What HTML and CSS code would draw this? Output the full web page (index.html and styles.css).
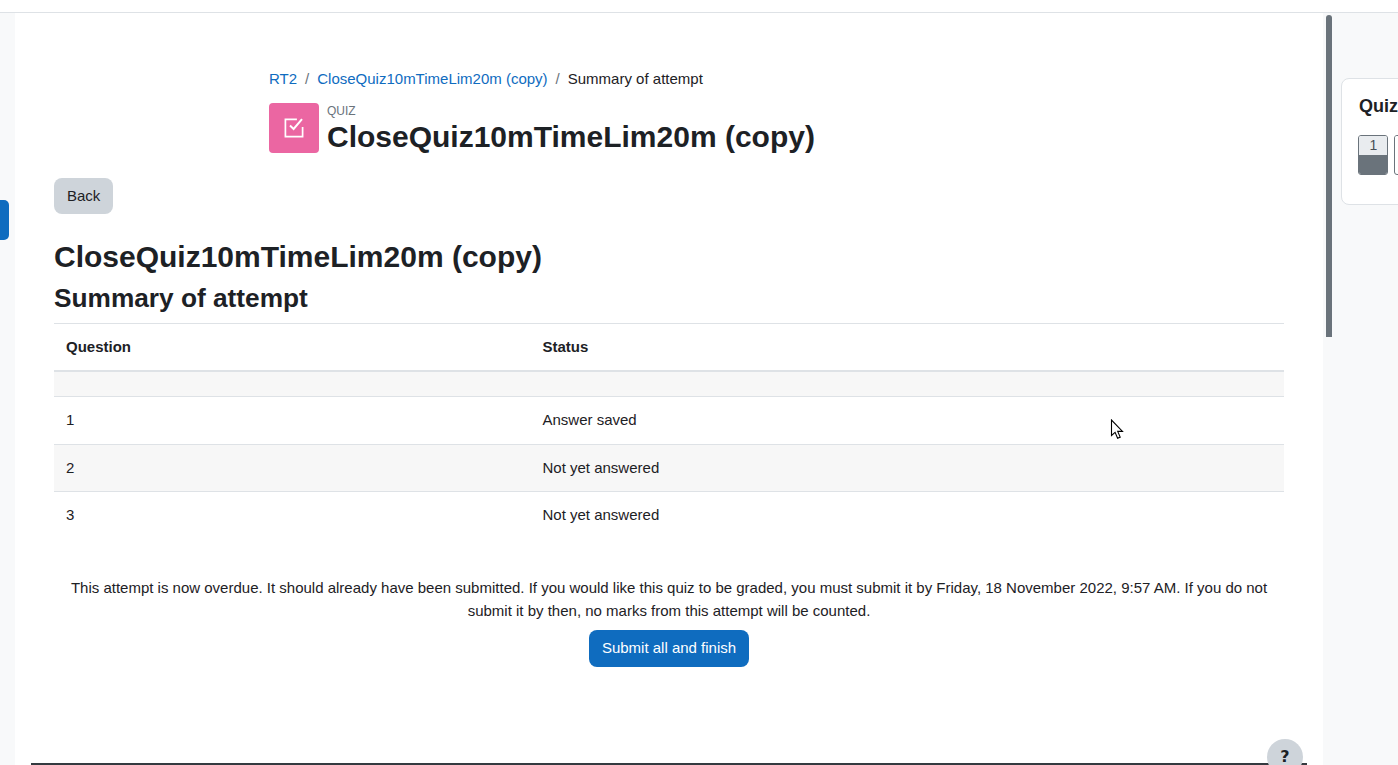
FILE: index.html
```html
<!DOCTYPE html>
<html lang="en">
<head>
<meta charset="utf-8">
<title>Summary of attempt</title>
<link rel="stylesheet" href="styles.css">
</head>
<body>
<div class="topbar"></div>
<div class="layout">
  <div class="left-strip"><span class="drawer-handle"></span></div>
  <main class="main">
    <div class="header-block">
      <nav class="breadcrumb">
        <a href="#">RT2</a><span class="sep">/</span><a href="#">CloseQuiz10mTimeLim20m (copy)</a><span class="sep">/</span><span class="current">Summary of attempt</span>
      </nav>
      <div class="title-row">
        <div class="activity-icon">
          <svg viewBox="0 0 24 24" width="24" height="24" fill="none" stroke="#fff" stroke-width="1.7"><path d="M20.6 11v9.6H3.4V3.4h11.5"/><path d="M8 9.6l3.6 3.4L20 3.2" stroke-width="2"/></svg>
        </div>
        <div class="title-text">
          <div class="modtype">QUIZ</div>
          <h1 class="page-title">CloseQuiz10mTimeLim20m (copy)</h1>
        </div>
      </div>
    </div>
    <a class="btn btn-back" href="#">Back</a>
    <h2 class="quiz-name">CloseQuiz10mTimeLim20m (copy)</h2>
    <h3 class="summary-title">Summary of attempt</h3>
    <table class="summary">
      <thead><tr><th class="col-q">Question</th><th>Status</th></tr></thead>
      <tbody>
        <tr class="odd spacer"><td></td><td></td></tr>
        <tr><td>1</td><td>Answer saved</td></tr>
        <tr class="odd row-short"><td>2</td><td>Not yet answered</td></tr>
        <tr><td>3</td><td>Not yet answered</td></tr>
      </tbody>
    </table>
    <p class="overdue">This attempt is now overdue. It should already have been submitted. If you would like this quiz to be graded, you must submit it by Friday, 18 November 2022, 9:57 AM. If you do not submit it by then, no marks from this attempt will be counted.</p>
    <div class="submit-row"><a class="btn btn-primary" href="#">Submit all and finish</a></div>
    <div class="footer-line"></div>
    <span class="help-badge">?</span>
  </main>
  <aside class="right">
    <span class="scroll-thumb"></span>
    <section class="nav-card">
      <h4 class="nav-title">Quiz navigation</h4>
      <div class="nav-buttons">
        <span class="qbtn saved"><span class="qnum">1</span><span class="qfill"></span></span>
        <span class="qbtn"><span class="qnum">2</span><span class="qfill"></span></span>
      </div>
    </section>
  </aside>
</div>
<svg class="cursor" width="14" height="21" viewBox="0 0 14 21"><path d="M1.5 1v15.5l3.6-3.2 2.5 5.9 2.6-1.1-2.5-5.7h4.8z" fill="#fff" stroke="#000" stroke-width="1.1"/></svg>
</body>
</html>
```
FILE: styles.css
```css
* { box-sizing: border-box; }
html, body { margin: 0; height: 765px; overflow: hidden; }
body {
  position: relative;
  font-family: "Liberation Sans", Arial, sans-serif;
  font-size: 15px;
  line-height: 22.5px;
  color: #1d2125;
  background: #f8f9fa;
}
a { color: #0f6cbf; text-decoration: none; }
.topbar { height: 13px; background: #fff; border-bottom: 1px solid #dee2e6; }
.layout { display: flex; height: 752px; }
.left-strip { width: 15px; flex: none; position: relative; }
.drawer-handle {
  position: absolute; left: 0; top: 187px; width: 9px; height: 40px;
  background: #0f6cbf; border-radius: 0 5px 5px 0;
}
.main {
  width: 1308px; flex: none; position: relative; background: #fff;
  padding: 55px 39px 0;
}
.header-block { padding-left: 215px; }
.breadcrumb { display: flex; height: 23px; align-items: center; }
.breadcrumb .sep { padding: 0 8px; color: #6a737b; }
.breadcrumb .current { color: #1d2125; }
.title-row { display: flex; margin-top: 12px; gap: 8px; }
.activity-icon {
  width: 50px; height: 50px; flex: none; background: #eb66a2; border-radius: 4px;
  display: flex; align-items: center; justify-content: center;
}
.title-text { display: flex; flex-direction: column; }
.modtype { font-size: 12px; line-height: 14px; color: #6a737b; margin-top: 1px; }
.page-title { margin: 1px 0 0; font-size: 30px; line-height: 36px; font-weight: 700; color: #1d2125; }
.btn {
  display: inline-block; font-size: 15px; line-height: 22.5px; padding: 7px 13px;
  border-radius: 8px;
}
.btn-back { background: #ced4da; color: #1d2125; margin-top: 23px; display: block; width: 59px; height: 36px; }
.quiz-name { margin: 25px 0 0; font-size: 30px; line-height: 36px; font-weight: 700; }
.summary-title { margin: 8px 0 0; font-size: 26.25px; line-height: 31px; font-weight: 700; }
.summary {
  width: 1230px; margin-top: 9px; border-collapse: collapse; table-layout: fixed;
  border-top: 1px solid #dee2e6;
}
.summary th, .summary td { padding: 12px; text-align: left; vertical-align: top; }
.summary th { height: 46px; padding-bottom: 11px; font-weight: 700; border-bottom: 2px solid #dee2e6; }
.summary td { height: 47px; border-top: 1px solid #dee2e6; }
.summary .row-short td { padding-bottom: 11px; }
.col-q { width: 476.5px; }
.summary .odd td { background: #f7f7f7; }
.summary .spacer td { height: 26px; padding: 0; border-top: 0; }
.overdue { margin: 38px 0 0; text-align: center; line-height: 23px; }
.submit-row { display: flex; justify-content: center; margin-top: 8px; }
.btn-primary { background: #0f6cbf; color: #fff; height: 37px; }
.footer-line {
  position: absolute; left: 16px; right: 16px; top: 750px; height: 2px; background: #343a40;
}
.help-badge {
  position: absolute; left: 1252px; top: 726px; width: 36px; height: 36px; border-radius: 50%;
  background: #ced4da; color: #1d2125; font-family: "DejaVu Sans", sans-serif; font-weight: 700; font-size: 16px;
  display: flex; align-items: center; justify-content: center; padding-top: 1px;
}
.right { flex: 1; position: relative; padding: 65px 0 0 17px; min-width: 0; overflow: hidden; }
.scroll-thumb {
  position: absolute; left: 3px; top: 2px; width: 6px; height: 322px;
  background: #6a737b; border-radius: 3px 3px 0 0;
}
.nav-card {
  width: 260px; height: 127px; background: #fff; border: 1px solid #dee2e6; border-radius: 8px;
  padding: 16px;
  margin-left: 1px;
}
.nav-title { margin: 0 0 0 1px; font-size: 18px; line-height: 22px; font-weight: 700; white-space: nowrap; }
.nav-buttons { display: flex; gap: 6px; margin-top: 18px; }
.qbtn {
  width: 30px; height: 40px; flex: none; border: 1px solid #6a737b; border-radius: 3px;
  overflow: hidden; display: flex; flex-direction: column; background: #fff;
}
.qnum { height: 19px; font-size: 14px; line-height: 19px; text-align: center; color: #495057; background: #fff; padding-left: 1px; }
.saved .qnum { background: #e9ecef; color: #495057; }
.qfill { flex: 1; }
.saved .qfill { background: #6a737b; }
.cursor { position: absolute; left: 1110px; top: 419px; }
```
